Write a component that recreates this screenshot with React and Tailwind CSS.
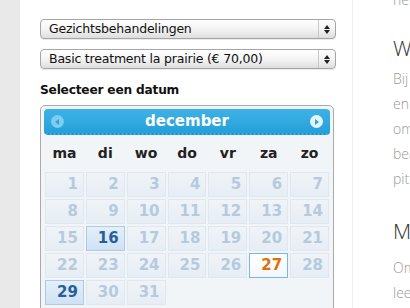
import React from "react";

function Select({ label }) {
  return (
    <div className="relative flex h-[20px] w-[296px] items-center rounded-[4px] border border-[#a5a5a5] bg-gradient-to-b from-[#ffffff] via-[#f4f4f4] to-[#dedede] shadow-[0_1px_0_rgba(0,0,0,0.08)]">
      <span className="flex-1 pl-[8px] text-[12.5px] leading-none text-[#111]" style={{ fontFamily: '"DejaVu Sans", Verdana, sans-serif', letterSpacing: "-0.2px" }}>
        {label}
      </span>
      <div className="flex h-full w-[17px] flex-col items-center justify-center border-l border-[#c8c8c8] gap-[1px]">
        <svg width="6" height="4" viewBox="0 0 6 4"><path d="M3 0 L6 4 L0 4 Z" fill="#222" /></svg>
        <svg width="6" height="4" viewBox="0 0 6 4"><path d="M0 0 L6 0 L3 4 Z" fill="#222" /></svg>
      </div>
    </div>
  );
}

const weeks = [
  [1, 2, 3, 4, 5, 6, 7],
  [8, 9, 10, 11, 12, 13, 14],
  [15, 16, 17, 18, 19, 20, 21],
  [22, 23, 24, 25, 26, 27, 28],
  [29, 30, 31, null, null, null, null],
];

function Cell({ n }) {
  if (n === null) return <div className="h-[25px]" />;
  if (n === 27) {
    return (
      <div className="flex h-[25px] items-center justify-end border border-[#79b7e7] bg-gradient-to-b from-[#ffffff] to-[#f3f7fb] pr-[5px] text-[15px] font-bold text-[#e0700f]">
        {n}
      </div>
    );
  }
  if (n === 16 || n === 29) {
    return (
      <div className="flex h-[25px] items-center justify-end border border-[#aecbe6] bg-gradient-to-b from-[#e4eff9] to-[#cfe2f3] pr-[5px] text-[15px] font-bold text-[#26609a]">
        {n}
      </div>
    );
  }
  return (
    <div className="flex h-[25px] items-center justify-end border border-[#dfe8f0] bg-gradient-to-b from-[#f0f4f8] to-[#e6edf4] pr-[5px] text-[15px] font-bold text-[#b6cade]">
      {n}
    </div>
  );
}

export default function App() {
  const verd = { fontFamily: '"DejaVu Sans", Verdana, sans-serif' };
  const open = { fontFamily: '"Open Sans", "Noto Sans", sans-serif' };
  return (
    <div className="flex h-[308px] w-[410px] overflow-hidden bg-white">
      <div className="h-full w-[20px] shrink-0 bg-[#e9e9e9]" />
      <div className="h-full w-[332px] shrink-0 pl-[20px] pt-[19px]" style={verd}>
        <Select label="Gezichtsbehandelingen" />
        <div className="h-[10px]" />
        <Select label="Basic treatment la prairie (€ 70,00)" />
        <div className="mt-[13px] text-[12.2px] font-bold leading-[16px] text-[#111]" style={{ letterSpacing: "-0.2px" }}>
          Selecteer een datum
        </div>
        <div className="mt-[7px] w-[294px] rounded-[5px] border border-[#aaaaaa] bg-[#f2f5f8] p-[3px] pb-0">
          <div className="relative flex h-[26px] items-center justify-center rounded-[4px] border-b-2 border-dotted border-[#1e8fc6] bg-gradient-to-b from-[#3eb2e6] to-[#24a0d9]">
            <span className="text-[15px] font-bold text-white">december</span>
            <div className="absolute left-[7px] top-[6px] flex h-[13px] w-[13px] items-center justify-center rounded-full bg-[#7fccef]">
              <svg width="5" height="6" viewBox="0 0 5 6"><path d="M4 0 L0 3 L4 6 Z" fill="#2aa6de" /></svg>
            </div>
            <div className="absolute right-[7px] top-[6px] flex h-[13px] w-[13px] items-center justify-center rounded-full bg-[#e6f5fc]">
              <svg width="5" height="6" viewBox="0 0 5 6"><path d="M1 0 L5 3 L1 6 Z" fill="#2aa6de" /></svg>
            </div>
          </div>
          <div className="grid h-[37px] grid-cols-7 items-center text-center text-[14px] font-bold text-[#222]">
            {["ma", "di", "wo", "do", "vr", "za", "zo"].map((d) => (
              <div key={d}>{d}</div>
            ))}
          </div>
          <div className="grid grid-cols-7 gap-[2px] px-[1px]">
            {weeks.flat().map((n, i) => (
              <Cell key={i} n={n} />
            ))}
          </div>
          <div className="h-[10px]" />
        </div>
      </div>
      <div className="h-full flex-1 border-l border-[#efefef] pl-[40px]" style={open}>
        <div className="-mt-[13px] text-[14px] font-light leading-[25px] text-[#999]">heli</div>
        <div className="mt-[22px] text-[21px] font-light leading-[28px] text-[#333]">Wa</div>
        <div className="mt-[4px] text-[14px] font-light leading-[25px] text-[#999]">
          <div>Bij</div>
          <div>en</div>
          <div>om</div>
          <div>bea</div>
          <div>pitt</div>
        </div>
        <div className="mt-[26px] text-[21px] font-light leading-[28px] text-[#333]">Mo</div>
        <div className="mt-[10px] text-[14px] font-light leading-[25px] text-[#999]">
          <div>Om</div>
          <div>lee</div>
        </div>
      </div>
    </div>
  );
}
